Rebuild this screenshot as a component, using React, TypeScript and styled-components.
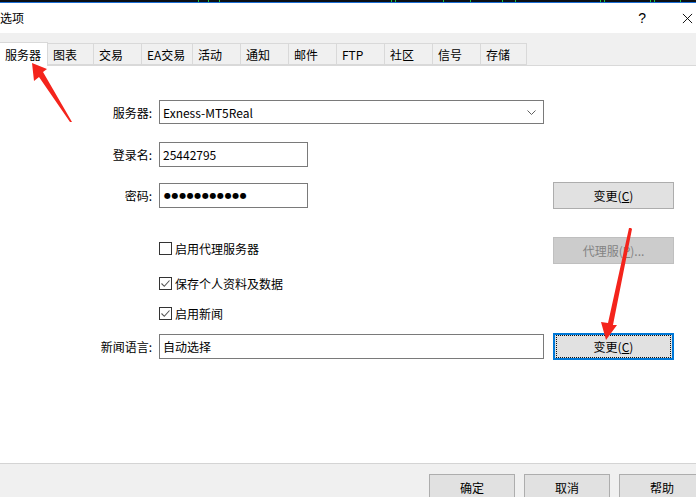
import React from "react";
import styled, { createGlobalStyle } from "styled-components";

const GlobalStyle = createGlobalStyle`
  html, body {
    margin: 0;
    padding: 0;
    background: #ffffff;
  }
  body {
    font-family: "Noto Sans CJK SC", "Noto Sans", sans-serif;
    font-size: 12px;
    color: #000;
  }
`;

const tabs: { label: string; width: number }[] = [
  { label: "服务器", width: 48 },
  { label: "图表", width: 46 },
  { label: "交易", width: 48 },
  { label: "EA交易", width: 51 },
  { label: "活动", width: 48 },
  { label: "通知", width: 48 },
  { label: "邮件", width: 48 },
  { label: "FTP", width: 48 },
  { label: "社区", width: 48 },
  { label: "信号", width: 48 },
  { label: "存储", width: 46 },
];

const ticks = [198, 208, 219, 391, 395, 443, 470, 502, 515, 600, 604, 650, 654, 680];

const CheckMark = () => (
  <Tickmark viewBox="0 0 11 11">
    <path d="M1.5 5.5 L4.3 8.3 L9.5 2.5" fill="none" stroke="#555" strokeWidth="1.1" />
  </Tickmark>
);

const App: React.FC = () => {
  return (
    <Window>
      <GlobalStyle />
      <TopStrip>
        {ticks.map((x) => (
          <Tick key={x} style={{ left: x }} />
        ))}
      </TopStrip>
      <TitleBar>
        <Title>选项</Title>
        <TitleButtons>
          <HelpGlyph>?</HelpGlyph>
          <CloseIcon viewBox="0 0 12 12">
            <path d="M1 1 L11 11 M11 1 L1 11" stroke="#000" strokeWidth="1" />
          </CloseIcon>
        </TitleButtons>
      </TitleBar>

      <TabStrip>
        {tabs.map((t, i) => (
          <Tab key={t.label} $active={i === 0} $width={t.width}>
            {t.label}
          </Tab>
        ))}
      </TabStrip>

      <Page>
        <Form>
          <Row $gap={0} $height={24}>
            <Label>服务器:</Label>
            <Field>
              <SelectBox $width={385}>
                <span>Exness-MT5Real</span>
                <Chevron viewBox="0 0 9 5">
                  <path d="M0.5 0.5 L4.5 4.5 L8.5 0.5" fill="none" stroke="#606060" />
                </Chevron>
              </SelectBox>
            </Field>
          </Row>

          <Row $gap={18} $height={25}>
            <Label>登录名:</Label>
            <Field>
              <TextBox $width={149}>25442795</TextBox>
            </Field>
          </Row>

          <Row $gap={15} $height={27}>
            <Label>密码:</Label>
            <Field>
              <TextBox $width={149}>
                <Dots>●●●●●●●●●●●</Dots>
              </TextBox>
            </Field>
            <Button>
              变更(<u>C</u>)
            </Button>
          </Row>

          <Row $gap={28} $height={27}>
            <Label />
            <Field>
              <Check $nudge={-2}>
                <Box />
                启用代理服务器
              </Check>
            </Field>
            <Button $disabled>
              代理服(<u>P</u>)...
            </Button>
          </Row>

          <Row $gap={13} $height={13}>
            <Label />
            <Field>
              <Check>
                <Box>
                  <CheckMark />
                </Box>
                保存个人资料及数据
              </Check>
            </Field>
          </Row>

          <Row $gap={17} $height={13}>
            <Label />
            <Field>
              <Check>
                <Box>
                  <CheckMark />
                </Box>
                启用新闻
              </Check>
            </Field>
          </Row>

          <Row $gap={13} $height={27}>
            <Label>新闻语言:</Label>
            <Field>
              <TextBox $width={385}>自动选择</TextBox>
            </Field>
            <Button $focused>
              <FocusRing>
                变更(<u>C</u>)
              </FocusRing>
            </Button>
          </Row>
        </Form>
      </Page>

      <Footer>
        <FooterButton>确定</FooterButton>
        <FooterButton>取消</FooterButton>
        <FooterButton>帮助</FooterButton>
      </Footer>

      <Annotations viewBox="0 0 696 497">
        <polygon
          points="32,63 47,69 43,72 72,122 70,122 39,77 34,81"
          fill="#f4241c"
        />
        <polygon
          points="631,228 632,229 613,325 617,325 606,340 601,322 608,323 629,228"
          fill="#f4241c"
        />
      </Annotations>
    </Window>
  );
};

const Window = styled.div`
  position: relative;
  width: 696px;
  height: 497px;
  overflow: hidden;
  background: #f0f0f0;
  display: flex;
  flex-direction: column;
`;

const TopStrip = styled.div`
  position: relative;
  height: 2px;
  background: #0b0f14;
  border-bottom: 1px solid #1c6fd6;
  flex-shrink: 0;
`;

const Tick = styled.span`
  position: absolute;
  top: 0;
  width: 1px;
  height: 2px;
  background: #1fc23a;
`;

const TitleBar = styled.div`
  height: 30px;
  background: #ffffff;
  display: flex;
  align-items: center;
  justify-content: space-between;
  flex-shrink: 0;
`;

const Title = styled.div`
  font-size: 12px;
  margin-top: -1px;
`;

const TitleButtons = styled.div`
  display: flex;
  align-items: center;
  gap: 36px;
  padding-right: 3px;
`;

const HelpGlyph = styled.span`
  font-family: "Liberation Sans", "DejaVu Sans", sans-serif;
  font-size: 14px;
  color: #000;
`;

const CloseIcon = styled.svg`
  width: 11px;
  height: 11px;
  display: block;
`;

const TabStrip = styled.div`
  margin-top: 10px;
  height: 22px;
  display: flex;
  align-items: flex-end;
  border-bottom: 1px solid #d9d9d9;
  flex-shrink: 0;
`;

const Tab = styled.div<{ $active?: boolean; $width: number }>`
  box-sizing: border-box;
  width: ${(p) => p.$width}px;
  height: ${(p) => (p.$active ? 24 : 22)}px;
  margin-bottom: ${(p) => (p.$active ? -1 : 0)}px;
  padding-left: 5px;
  display: flex;
  align-items: center;
  background: ${(p) => (p.$active ? "#ffffff" : "#f0f0f0")};
  border-top: 1px solid #d9d9d9;
  border-right: 1px solid #d9d9d9;
  border-bottom: ${(p) => (p.$active ? "none" : "1px solid #d9d9d9")};
  white-space: nowrap;
  font-size: 12px;
`;

const Page = styled.div`
  flex: 1;
  background: #ffffff;
  border-bottom: 1px solid #d4d4d4;
`;

const Form = styled.div`
  padding-top: 34px;
  display: flex;
  flex-direction: column;
`;

const Row = styled.div<{ $gap: number; $height: number }>`
  display: flex;
  align-items: center;
  height: ${(p) => p.$height}px;
  margin-top: ${(p) => p.$gap}px;
`;

const Label = styled.div`
  width: 152px;
  margin-right: 7px;
  text-align: right;
  flex-shrink: 0;
  color: #000;
`;

const Field = styled.div`
  width: 385px;
  margin-right: 9px;
  flex-shrink: 0;
  display: flex;
  align-items: center;
`;

const TextBox = styled.div<{ $width: number }>`
  box-sizing: border-box;
  width: ${(p) => p.$width}px;
  height: 25px;
  border: 1px solid #7a7a7a;
  padding-left: 3px;
  display: flex;
  align-items: center;
  background: #fff;
  white-space: nowrap;
`;

const SelectBox = styled(TextBox)`
  height: 24px;
  justify-content: space-between;
  padding-right: 7px;
`;

const Chevron = styled.svg`
  width: 9px;
  height: 5px;
  display: block;
`;

const Dots = styled.span`
  font-family: "DejaVu Sans", sans-serif;
  font-size: 8px;
  letter-spacing: 0.6px;
  margin-left: 1px;
`;

const Button = styled.div<{ $disabled?: boolean; $focused?: boolean }>`
  box-sizing: border-box;
  width: 121px;
  height: 27px;
  flex-shrink: 0;
  display: flex;
  align-items: center;
  justify-content: center;
  background: ${(p) => (p.$disabled ? "#cccccc" : "#e1e1e1")};
  border: ${(p) =>
    p.$focused ? "2px solid #0078d7" : p.$disabled ? "1px solid #bfbfbf" : "1px solid #adadad"};
  color: ${(p) => (p.$disabled ? "#838383" : "#000")};
  u {
    text-underline-offset: 1px;
  }
`;

const FocusRing = styled.div`
  box-sizing: border-box;
  width: 100%;
  height: 100%;
  margin: 1px;
  border: 1px dotted #111;
  display: flex;
  align-items: center;
  justify-content: center;
`;

const Check = styled.label<{ $nudge?: number }>`
  display: flex;
  align-items: center;
  gap: 3px;
  height: 13px;
  line-height: 13px;
  margin-top: ${(p) => (p.$nudge ?? 0) * 2}px;
  white-space: nowrap;
`;

const Box = styled.span`
  box-sizing: border-box;
  width: 13px;
  height: 13px;
  border: 1px solid #333333;
  background: #fff;
  display: flex;
  align-items: center;
  justify-content: center;
`;

const Tickmark = styled.svg`
  width: 11px;
  height: 11px;
  display: block;
`;

const Footer = styled.div`
  height: 33px;
  flex-shrink: 0;
  display: flex;
  justify-content: flex-end;
  align-items: flex-start;
  gap: 9px;
  padding-top: 10px;
  margin-right: -9px;
  box-sizing: border-box;
`;

const FooterButton = styled.div`
  box-sizing: border-box;
  width: 86px;
  height: 27px;
  flex-shrink: 0;
  background: #e1e1e1;
  border: 1px solid #adadad;
  display: flex;
  align-items: center;
  justify-content: center;
`;

const Annotations = styled.svg`
  position: absolute;
  inset: 0;
  width: 696px;
  height: 497px;
  pointer-events: none;
`;

export default App;
